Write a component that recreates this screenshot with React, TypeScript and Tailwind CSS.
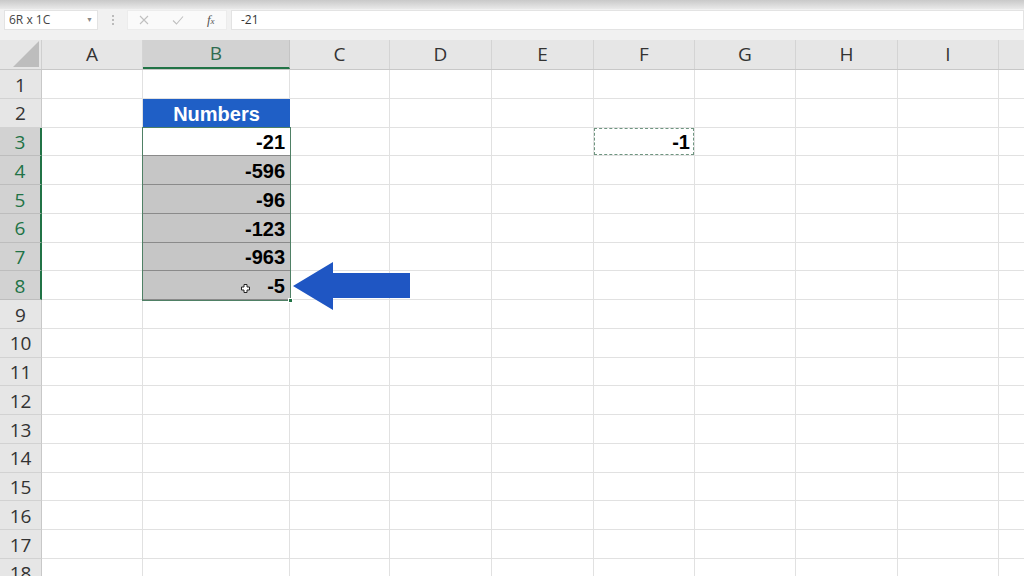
import React from "react";

const cols = [
  { l: "A", w: "w-[101px]" },
  { l: "B", w: "w-[147px]" },
  { l: "C", w: "w-[100px]" },
  { l: "D", w: "w-[102px]" },
  { l: "E", w: "w-[102px]" },
  { l: "F", w: "w-[101px]" },
  { l: "G", w: "w-[101px]" },
  { l: "H", w: "w-[102px]" },
  { l: "I", w: "w-[101px]" },
  { l: "", w: "w-[101px]" },
];

const numbers: Record<number, string> = { 3: "-21", 4: "-596", 5: "-96", 6: "-123", 7: "-963", 8: "-5" };

const rows = Array.from({ length: 18 }, (_, i) => i + 1);

function Cell({ row, col, w }: { row: number; col: string; w: string }) {
  const base = `${w} shrink-0 h-full border-r border-b border-[#e1e1e1] flex items-center`;
  if (col === "B" && row === 2) {
    return (
      <div className={`${w} shrink-0 h-full bg-[#1f5fc6] border-b border-[#1f5fc6] flex items-center justify-center pt-[2px] text-white font-bold text-[20px]`}>
        Numbers
      </div>
    );
  }
  if (col === "B" && numbers[row]) {
    const bg = row === 3 ? "bg-white" : "bg-[#c6c6c6]";
    return (
      <div className={`${w} shrink-0 h-full ${bg} border-b border-[#8a8a8a] flex items-center justify-end pr-[5px] pt-[2px] font-bold text-[20px] text-black relative`}>
        {row === 8 && (
          <svg className="absolute left-[98px] top-[13px]" width="9" height="9" viewBox="0 0 9 9">
            <path d="M3 0.5h3v2.5h2.5v3H6v2.5H3V6H0.5V3H3z" fill="white" stroke="#222" strokeWidth="1" />
          </svg>
        )}
        {numbers[row]}
      </div>
    );
  }
  if (col === "F" && row === 3) {
    return (
      <div className={`${base} p-0`}>
        <div className="w-full h-full border-[1.5px] border-dashed border-[#6f9580] flex items-center justify-end pr-[3px] pt-[2px] font-bold text-[20px] text-black">
          -1
        </div>
      </div>
    );
  }
  return <div className={base} />;
}

export default function App() {
  return (
    <div className="relative w-[1024px] h-[576px] overflow-hidden bg-white font-['Liberation_Sans',Arial,sans-serif]">
      {/* top ribbon edge */}
      <div className="h-[9px] bg-gradient-to-b from-[#c9c9c9] to-[#e9e9e9]" />

      {/* formula bar */}
      <div className="h-[31px] bg-[#f1f1f1] flex items-start pt-[1px] font-['Open_Sans',sans-serif]">
        <div className="ml-[4px] w-[94px] h-[20px] bg-white border border-[#e3e3e3] flex items-center justify-between px-[4px] text-[12px] text-[#444]">
          <span>6R x 1C</span>
          <span className="text-[7px] text-[#888]">▼</span>
        </div>
        <div className="w-[29px] h-[20px] flex flex-col items-center justify-center gap-[2px]">
          <span className="w-[2px] h-[2px] bg-[#bbb]" />
          <span className="w-[2px] h-[2px] bg-[#bbb]" />
          <span className="w-[2px] h-[2px] bg-[#bbb]" />
        </div>
        <div className="w-[100px] h-[20px] bg-[#fafafa] border border-[#ececec] flex items-center justify-around text-[#bdbdbd]">
          <svg width="10" height="10" viewBox="0 0 10 10">
            <path d="M1 1l8 8M9 1l-8 8" stroke="#c0c0c0" strokeWidth="1.1" />
          </svg>
          <svg width="12" height="10" viewBox="0 0 12 10">
            <path d="M1 5.5l3.5 3.5L11 1.5" stroke="#c0c0c0" strokeWidth="1.1" fill="none" />
          </svg>
          <span className="font-['Liberation_Serif',serif] italic text-[13px] text-[#555]">
            f<span className="text-[9px]">x</span>
          </span>
        </div>
        <div className="ml-[4px] flex-1 h-[20px] bg-white border border-[#e3e3e3] flex items-center pl-[9px] text-[12px] text-[#333]">
          -21
        </div>
      </div>

      {/* column headers */}
      <div className="flex h-[30px] bg-[#e6e6e6] border-b border-[#c8c8c8] font-['Open_Sans',sans-serif] text-[19px] text-[#333]">
        <div className="w-[42px] shrink-0 h-full border-r border-[#cfcfcf] flex items-end justify-end pb-[2px] pr-[2px]">
          <svg width="26" height="26" viewBox="0 0 26 26">
            <path d="M26 0V26H0Z" fill="#bdbdbd" />
          </svg>
        </div>
        {cols.map((c, i) =>
          c.l === "B" ? (
            <div
              key={i}
              className={`${c.w} shrink-0 h-full bg-[#d2d2d2] border-r border-[#c4c4c4] border-b-2 border-b-[#217346] flex items-center justify-center text-[#2f6b4f]`}
            >
              {c.l}
            </div>
          ) : (
            <div key={i} className={`${c.w} shrink-0 h-full border-r border-[#d4d4d4] flex items-center justify-center`}>
              {c.l}
            </div>
          )
        )}
      </div>

      {/* grid */}
      <div className="flex flex-col">
        {rows.map((r) => {
          const sel = r >= 3 && r <= 8;
          return (
            <div key={r} className="flex h-[28.75px] shrink-0">
              <div
                className={`w-[42px] shrink-0 h-full border-b flex items-center justify-center pt-[2px] font-['Open_Sans',sans-serif] text-[19px] ${
                  sel
                    ? "bg-[#d2d2d2] text-[#217346] border-r-2 border-r-[#217346] border-b-[#bdbdbd]"
                    : "bg-[#e6e6e6] text-[#333] border-r border-r-[#c8c8c8] border-b-[#d2d2d2]"
                }`}
              >
                {r}
              </div>
              {cols.map((c, i) => (
                <Cell key={i} row={r} col={c.l} w={c.w} />
              ))}
            </div>
          );
        })}
      </div>

      {/* selection outline B3:B8 */}
      <div className="absolute left-[142px] top-[127px] w-[149px] h-[174px] border border-[#4f8065] pointer-events-none">
        <div className="absolute -right-[3px] -bottom-[3px] w-[5px] h-[5px] bg-[#217346] border border-white" />
      </div>

      {/* arrow */}
      <svg className="absolute left-[293px] top-[261px]" width="118" height="50" viewBox="0 0 118 50">
        <path d="M0 25L40 1V12H117V37H40V49Z" fill="#1f56c3" />
      </svg>
    </div>
  );
}
